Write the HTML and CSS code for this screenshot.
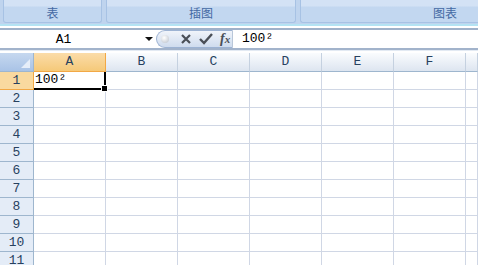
FILE: index.html
```html
<!DOCTYPE html>
<html lang="zh">
<head>
    <meta charset="UTF-8">
    <title>Excel - 上标</title>
    <link rel="stylesheet" href="styles.css">
</head>
<body>
    <div class="ribbon">
        <div class="group group-table"><span class="group-label">表</span></div>
        <div class="group group-picture"><span class="group-label">插图</span></div>
        <div class="group group-chart"><span class="group-label">图表</span></div>
    </div>

    <div class="formula-bar">
        <div class="name-box">
            <span class="name-text">A1</span>
            <span class="name-arrow"></span>
        </div>
        <div class="fx-pill">
            <span class="pill-dot"></span>
            <svg class="pill-icon" width="12" height="12" viewBox="0 0 12 12">
                <path d="M2 2 L10 10 M10 2 L2 10" stroke="#4a4f57" stroke-width="2.2" fill="none"/>
            </svg>
            <svg class="pill-icon" width="14" height="12" viewBox="0 0 14 12">
                <path d="M1 6 L5 10 L13 1" stroke="#4a4f57" stroke-width="2.4" fill="none"/>
            </svg>
            <span class="fx">f<small>x</small></span>
        </div>
        <div class="formula-input">100²</div>
    </div>

    <div class="sheet">
        <div class="grid" id="grid"></div>
    </div>

    <script>
        const cols = ["A", "B", "C", "D", "E", "F", ""];
        const grid = document.getElementById("grid");

        function cell(cls, text) {
            const div = document.createElement("div");
            div.className = cls;
            if (text) div.textContent = text;
            grid.appendChild(div);
            return div;
        }

        cell("corner");
        cols.forEach((c, i) => cell(i === 0 ? "col-head active" : "col-head", c));

        for (let r = 1; r <= 11; r++) {
            cell(r === 1 ? "row-head active" : "row-head", String(r));
            cols.forEach((c, i) => {
                if (r === 1 && i === 0) {
                    const sel = cell("cell selected", "100²");
                    const handle = document.createElement("span");
                    handle.className = "fill-handle";
                    sel.appendChild(handle);
                } else {
                    cell("cell");
                }
            });
        }
    </script>
</body>
</html>
```

FILE: styles.css
```css
body {
    margin: 0;
    width: 478px;
    height: 265px;
    overflow: hidden;
    background: #ffffff;
    font-family: "Liberation Mono", "DejaVu Sans Mono", monospace;
}

/* ribbon group labels */
.ribbon {
    display: flex;
    height: 24px;
    padding-left: 3px;
    gap: 4px;
    background: #bfd4ee;
    border-bottom: 2px solid #b4e3f3;
    overflow: hidden;
}

.group {
    flex: none;
    height: 23px;
    box-sizing: border-box;
    border: 1px solid #a7c2e4;
    border-top: none;
    border-radius: 0 0 3px 3px;
    background: linear-gradient(#d3e2f5 0, #d3e2f5 6px, #c2d7f0 7px, #c2d7f0 100%);
    display: flex;
    justify-content: center;
    align-items: flex-end;
    padding-bottom: 2px;
}

.group-table { width: 99px; }
.group-picture { width: 190px; }

.group-chart {
    flex: 1;
    justify-content: flex-end;
    padding-right: 21px;
    border-right: none;
    border-radius: 0 0 0 3px;
}

.group-label {
    font-family: "Noto Sans CJK SC", sans-serif;
    font-size: 12px;
    line-height: 14px;
    color: #4469a3;
}

/* formula bar */
.formula-bar {
    display: flex;
    height: 18px;
    border-top: 2px solid #9fb1c9;
    border-bottom: 2px solid #a2b3cb;
    margin-top: 2px;
    background: #ffffff;
}

.name-box {
    width: 156px;
    display: flex;
    align-items: center;
}

.name-text {
    flex: 1;
    text-align: center;
    font-size: 13px;
    color: #000;
    padding-right: 18px;
}

.name-arrow {
    width: 0;
    height: 0;
    border-left: 4px solid transparent;
    border-right: 4px solid transparent;
    border-top: 4px solid #111;
    margin-right: 3px;
}

.fx-pill {
    width: 77px;
    height: 18px;
    box-sizing: border-box;
    display: flex;
    align-items: center;
    gap: 7px;
    padding-left: 4px;
    border-radius: 9px 0 0 9px;
    border: 1px solid #9db3d3;
    border-right: 1px solid #b9c7d9;
    background: linear-gradient(#f0f4fa, #cfdcee);
}

.pill-dot {
    width: 8px;
    height: 8px;
    border-radius: 50%;
    background: radial-gradient(circle at 40% 35%, #fff, #b9c0ca);
    margin-right: 4px;
}

.fx {
    font-family: "Liberation Serif", serif;
    font-style: italic;
    font-weight: bold;
    font-size: 14px;
    color: #4a4f57;
}

.fx small {
    font-size: 11px;
}

.formula-input {
    flex: 1;
    font-size: 13px;
    line-height: 18px;
    padding-left: 9px;
    color: #000;
}

/* worksheet */
.sheet {
    border-top: 1px solid #e3eaf3;
    padding-top: 2px;
    background: #ffffff;
}

.grid {
    display: grid;
    grid-template-columns: 34px repeat(6, 72px) 12px;
    grid-template-rows: 19px;
    grid-auto-rows: 18px;
}

.corner {
    box-sizing: border-box;
    border-right: 1px solid #9eb6ce;
    border-bottom: 1px solid #9eb6ce;
    background: linear-gradient(#c6d8ef, #a9c3e6);
    position: relative;
}

.corner::after {
    content: "";
    position: absolute;
    right: 3px;
    bottom: 3px;
    border-left: 9px solid transparent;
    border-bottom: 9px solid #e6eef9;
}

.col-head {
    box-sizing: border-box;
    border-right: 1px solid #c5d1e0;
    border-bottom: 1px solid #9eb6ce;
    background: linear-gradient(#fafcfe, #dde5f0);
    text-align: center;
    font-size: 13px;
    line-height: 18px;
    color: #27415f;
}

.row-head {
    box-sizing: border-box;
    border-right: 1px solid #9eb6ce;
    border-bottom: 1px solid #9eb6ce;
    background: #e4ecf7;
    text-align: center;
    font-size: 13px;
    line-height: 18px;
    color: #27415f;
}

.col-head.active {
    background: linear-gradient(#fbdca9, #f5c979);
    border-right-color: #f2a845;
    border-bottom-color: #f2a845;
}

.row-head.active {
    background: #f9d99f;
    border-right-color: #f2a845;
    border-bottom-color: #f2a845;
}

.cell {
    box-sizing: border-box;
    border-right: 1px solid #d0d7e5;
    border-bottom: 1px solid #d0d7e5;
}

.cell.selected {
    position: relative;
    border-right: 2px solid #000;
    border-bottom: 2px solid #000;
    font-size: 13px;
    line-height: 16px;
    padding-left: 1px;
    color: #000;
}

.fill-handle {
    position: absolute;
    right: -4px;
    bottom: -4px;
    width: 5px;
    height: 5px;
    background: #000;
    border: 1px solid #fff;
}
```
